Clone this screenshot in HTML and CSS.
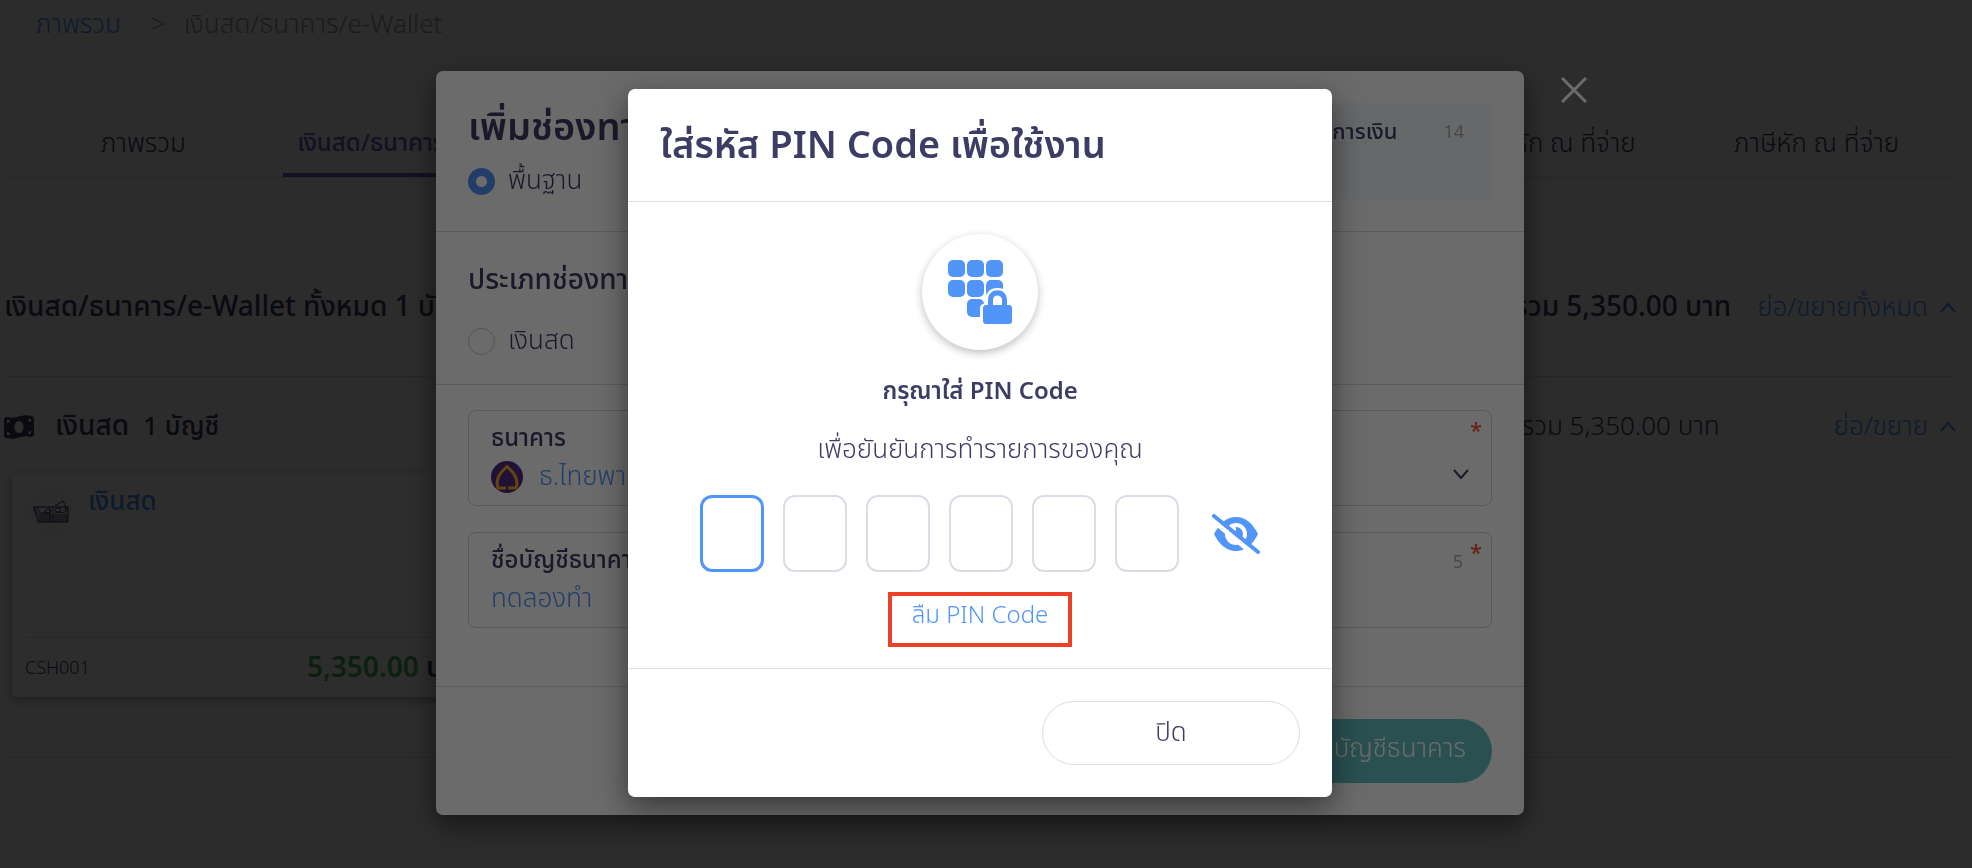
FILE: index.html
```html
<!DOCTYPE html>
<html lang="th">
<head>
    <meta charset="UTF-8">
    <meta name="viewport" content="width=device-width, initial-scale=1.0">
    <title>เงินสด/ธนาคาร/e-Wallet</title>
    <link rel="stylesheet" href="styles.css">
</head>
<body>
    <main class="page">
        <nav class="breadcrumb">
            <a href="#">ภาพรวม</a>
            <span class="sep">&gt;</span>
            <span>เงินสด/ธนาคาร/e-Wallet</span>
        </nav>
        <nav class="tabs">
            <a class="tab" href="#">ภาพรวม</a>
            <a class="tab active" href="#">เงินสด/ธนาคาร/e-Wallet</a>
            <a class="tab" href="#">สำรองรับ-จ่าย</a>
            <a class="tab" href="#">เช็ครับ</a>
            <a class="tab" href="#">เช็คจ่าย</a>
            <a class="tab" href="#">ภาษีถูกหัก ณ ที่จ่าย</a>
            <a class="tab" href="#">ภาษีหัก ณ ที่จ่าย</a>
        </nav>
        <section class="summary">
            <h2>เงินสด/ธนาคาร/e-Wallet ทั้งหมด 1 บัญชี</h2>
            <strong class="total">รวม 5,350.00 บาท</strong>
            <a class="toggle" href="#">ย่อ/ขยายทั้งหมด
                <svg width="16" height="10" viewBox="0 0 16 10"><path d="M1 9l7-8 7 8"/></svg>
            </a>
        </section>
        <section class="group">
            <svg class="bill" width="30" height="24" viewBox="0 0 30 24">
                <path fill-rule="evenodd" d="M3 2C10 5 18-2 27 1q3 0 3 3v15q0 3-3 3C18 19 11 26 3 23q-3 0-3-3V4q0-2 3-2zM15 6c-6 0-6 12 0 12s6-12 0-12zM3 5v3q3 0 3-3zm0 15h3q0-3-3-3zM27 4h-3q0 3 3 3zm0 15v-3q-3 0-3 3z"/>
            </svg>
            <h3>เงินสด</h3>
            <span class="count">1 บัญชี</span>
            <span class="total">รวม 5,350.00 บาท</span>
            <a class="toggle" href="#">ย่อ/ขยาย
                <svg width="16" height="10" viewBox="0 0 16 10"><path d="M1 9l7-8 7 8"/></svg>
            </a>
        </section>
        <article class="card">
            <div class="card-top">
                <span class="card-icon">
                    <svg width="36" height="24" viewBox="0 0 36 24">
                        <path d="M1 7h34v15H5L1 8zM1 7l4 8h30M5 17h30M5 19h30M5 21h30M17 7v15M20 7v15M22 6l8-5 5 10"/>
                        <path d="M4 7l3 6h9M32 7l1 5-11 1"/>
                        <ellipse cx="15" cy="11" rx="3" ry="2"/><ellipse cx="25" cy="10" rx="3" ry="2"/>
                    </svg>
                </span>
                <a href="#">เงินสด</a>
            </div>
            <div class="card-bottom">
                <span class="code">CSH001</span>
                <strong><span class="green">5,350.00</span> บาท</strong>
            </div>
        </article>
    </main>

    <div class="overlay">
        <div class="dialog dialog-channel">
            <form class="dialog-form">
                <header class="channel-head">
                    <div>
                        <h1>เพิ่มช่องทางการเงิน</h1>
                        <label class="radio"><input type="radio" name="level" checked> พื้นฐาน</label>
                    </div>
                    <div class="info">
                        <span>ชื่อช่องทางการเงิน</span>
                        <small>14</small>
                    </div>
                </header>
                <section class="channel-type">
                    <h2>ประเภทช่องทางการเงิน</h2>
                    <label class="radio"><input type="radio" name="type"> เงินสด</label>
                </section>
                <section class="fields">
                    <div class="field">
                        <label for="bank">ธนาคาร</label>
                        <div class="bank">
                            <svg width="32" height="32" viewBox="0 0 32 32">
                                <circle cx="16" cy="16" r="16" fill="#4e2a84"/>
                                <path d="M15 27H7l-1-4C6 15 11 10 16 5.500 21 10 26 15 26 23l-1 4h-8" fill="none" stroke="#f0a028" stroke-width="3"/>
                                <path d="M16 22v5" stroke="#4e2a84" stroke-width="2"/>
                            </svg>
                            <select id="bank"><option>ธ.ไทยพาณิชย์</option></select>
                            <svg class="chevron" width="16" height="10" viewBox="0 0 16 10"><path d="M1 1l7 8 7-8"/></svg>
                        </div>
                        <span class="required">*</span>
                    </div>
                    <div class="field">
                        <label for="account">ชื่อบัญชีธนาคาร</label>
                        <input id="account" type="text" value="ทดลองทำ">
                        <small class="counter">5</small>
                        <span class="required">*</span>
                    </div>
                </section>
                <footer>
                    <button type="button" class="btn-primary">เพิ่มบัญชีธนาคาร</button>
                </footer>
            </form>
            <button class="close" type="button" aria-label="ปิด">
                <svg width="26" height="26" viewBox="0 0 26 26"><path d="M1 1l24 24M25 1L1 25"/></svg>
            </button>
        </div>
    </div>

    <div class="overlay">
        <div class="dialog dialog-pin">
            <header>
                <h1>ใส่รหัส PIN Code เพื่อใช้งาน</h1>
            </header>
            <section class="pin-body">
                <div class="pin-icon">
                    <svg width="64" height="64" viewBox="0 0 64 64">
                        <rect x="0" y="0" width="17" height="17" rx="5"/>
                        <rect x="19" y="0" width="17" height="17" rx="5"/>
                        <rect x="38" y="0" width="17" height="17" rx="5"/>
                        <rect x="0" y="20" width="17" height="17" rx="5"/>
                        <rect x="19" y="20" width="17" height="17" rx="5"/>
                        <rect x="38" y="20" width="17" height="17" rx="5"/>
                        <rect x="19" y="39" width="17" height="18" rx="5"/>
                        <path class="halo" d="M38 43v-3q0-12 11.500-12t11.500 12v5h3v20H38q-6 0-6-4V48q0-4 6-5z"/>
                        <path d="M40 45v-5c0-13 19-13 19 0v5h2q3 0 3 3v13q0 3-3 3H38q-3 0-3-3V48q0-3 3-3zm5 0h9v-5c0-6-9-6-9 0z" fill-rule="evenodd"/>
                    </svg>
                </div>
                <h2>กรุณาใส่ PIN Code</h2>
                <p>เพื่อยันยันการทำรายการของคุณ</p>
                <div class="pin-row">
                    <input class="pin focus" type="password" maxlength="1" aria-label="PIN 1">
                    <input class="pin" type="password" maxlength="1" aria-label="PIN 2">
                    <input class="pin" type="password" maxlength="1" aria-label="PIN 3">
                    <input class="pin" type="password" maxlength="1" aria-label="PIN 4">
                    <input class="pin" type="password" maxlength="1" aria-label="PIN 5">
                    <input class="pin" type="password" maxlength="1" aria-label="PIN 6">
                    <button class="eye" type="button" aria-label="แสดง PIN">
                        <svg width="48" height="40" viewBox="0 0 48 40">
                            <path class="fill" d="M2 20C7 10 14 3 24 3s17 7 22 17C41 30 34 37 24 37S7 30 2 20z"/>
                            <circle class="ring" cx="24" cy="20" r="9"/>
                            <circle class="gap" cx="21" cy="15" r="3"/>
                            <path class="cut" d="M-1 5l46 38"/>
                            <path class="slash" d="M2 2l44 36"/>
                        </svg>
                    </button>
                </div>
                <a class="forgot" href="#">ลืม PIN Code</a>
            </section>
            <footer>
                <button type="button" class="btn-outline">ปิด</button>
            </footer>
        </div>
    </div>
</body>
</html>
```
FILE: styles.css
```css
* {
    box-sizing: border-box;
}
body {
    margin: 0;
    height: 100vh;
    overflow: hidden;
    background: #f6f6f6;
    color: #3c3c64;
    font-family: "Noto Sans Thai", "Noto Sans", sans-serif;
    font-size: 26px;
    font-weight: 350;
    line-height: 32px;
}
h1, h2, h3, p {
    margin: 0;
}
a {
    color: #5195f8;
    text-decoration: none;
}
svg {
    flex: none;
}
button, input, select {
    font: inherit;
    color: inherit;
}
.page {
    padding: 0 16px 0 4px;
}
.breadcrumb {
    display: flex;
    gap: 18px;
    padding: 9px 32px 7px;
    color: #999;
    font-weight: 300;
}
.breadcrumb .sep {
    margin-left: 12px;
}
.tabs {
    display: grid;
    grid-template-columns: repeat(7, 1fr);
    margin-top: 67px;
    border-bottom: 1px solid #d8d8e4;
}
.tab {
    height: 62px;
    padding-top: 13px;
    text-align: center;
    color: #3c3c64;
    white-space: nowrap;
}
.tab.active {
    color: #6464c8;
    font-size: 24px;
    font-weight: 500;
    border-bottom: 4px solid #6464c8;
}
.summary {
    display: flex;
    align-items: center;
    height: 199px;
    padding-top: 62px;
    border-bottom: 1px solid #dcdce6;
}
.summary h2 {
    flex: 1;
    font-size: 28px;
    font-weight: 500;
}
.summary .total {
    font-size: 28px;
    font-weight: 500;
    margin-right: 26px;
}
.toggle {
    display: flex;
    align-items: center;
    gap: 12px;
    font-weight: 300;
}
.toggle path, .chevron path {
    fill: none;
    stroke: currentColor;
    stroke-width: 2;
}
.group {
    display: flex;
    align-items: center;
    height: 96px;
    padding-top: 4px;
}
.group .bill {
    fill: #3c3c64;
}
.group h3 {
    margin: 0 14px 0 21px;
    font-size: 28px;
    font-weight: 500;
}
.group .count {
    flex: 1;
    font-weight: 500;
}
.group .total {
    font-weight: 300;
}
.group .toggle {
    margin-left: 114px;
}
.card {
    width: 474px;
    height: 224px;
    margin-left: 8px;
    padding: 13px;
    background: #fff;
    border-radius: 6px;
    box-shadow: 0 3px 8px rgba(0, 0, 0, 0.3);
}
.card-top {
    display: flex;
    gap: 12px;
    height: 152px;
    border-bottom: 1px solid #dcdce6;
    font-weight: 500;
}
.card-icon {
    display: flex;
    align-items: center;
    justify-content: center;
    width: 51px;
    height: 51px;
    border-radius: 50%;
    background: #f6f6f6;
}
.card-icon svg {
    fill: none;
    stroke: #3c3c64;
}
.card-bottom {
    display: flex;
    align-items: center;
    justify-content: space-between;
    padding-top: 15px;
    font-size: 28px;
}
.card-bottom strong {
    font-weight: 600;
}
.code {
    font-size: 18px;
}
.green {
    color: #46af5a;
}
.page::after {
    content: "";
    display: block;
    margin-top: 60px;
    border-top: 1px solid #dcdce6;
}

.overlay {
    position: fixed;
    inset: 0;
    display: flex;
    justify-content: center;
    align-items: center;
    padding-right: 12px;
    background: rgba(0, 0, 0, 0.58);
}
.dialog {
    position: relative;
    margin-top: 18px;
    background: #fff;
    border-radius: 7px;
    box-shadow: 0 10px 30px rgba(0, 0, 0, 0.5);
}
.dialog h1 {
    font-size: 38px;
    font-weight: 600;
    line-height: 52px;
}
.dialog header, .dialog section {
    border-bottom: 1px solid #dcdce6;
}
.dialog footer {
    display: flex;
    justify-content: flex-end;
    padding: 32px;
}
.dialog-channel {
    width: 1088px;
}
.channel-head {
    display: flex;
    justify-content: space-between;
    height: 161px;
    padding: 32px;
}
.info {
    display: flex;
    justify-content: space-between;
    width: 500px;
    height: 96px;
    padding: 14px 28px 0;
    background: #f5f7fd;
    border-radius: 6px;
    font-size: 22px;
    font-weight: 500;
}
.info span {
    flex: 1;
    text-align: right;
    margin-right: 46px;
}
.dialog small {
    font-size: 18px;
    font-weight: 400;
    color: #aaa;
}
.radio {
    display: flex;
    align-items: center;
    gap: 13px;
}
.channel-head .radio {
    margin-top: 10px;
}
.radio input {
    appearance: none;
    width: 27px;
    height: 27px;
    margin: 0;
    border: 1px solid #c8c8d2;
    border-radius: 50%;
}
.radio input:checked {
    border: 8px solid #5195f8;
}
.channel-type {
    height: 153px;
    padding: 32px;
}
.channel-type h2 {
    font-size: 28px;
    font-weight: 500;
    line-height: 34px;
    margin-bottom: 27px;
}
.fields {
    display: grid;
    gap: 26px;
    height: 302px;
    padding: 25px 32px;
    align-content: start;
}
.field {
    position: relative;
    display: flex;
    flex-direction: column;
    gap: 6px;
    height: 96px;
    padding: 12px 22px;
    border: 1px solid #d0d0dc;
    border-radius: 8px;
}
.field label {
    font-size: 24px;
    font-weight: 500;
}
.field input, .field select {
    flex: 1;
    appearance: none;
    padding: 0;
    border: 0;
    background: none;
    color: #5195f8;
}
.bank {
    display: flex;
    align-items: center;
    gap: 16px;
    height: 32px;
}
.chevron {
    margin-bottom: 6px;
}
.required {
    position: absolute;
    top: 5px;
    right: 9px;
    font-size: 22px;
    font-weight: 500;
    color: #f05032;
}
.counter {
    position: absolute;
    top: 14px;
    right: 28px;
}
.btn-primary {
    height: 64px;
    width: 300px;
    border: 0;
    border-radius: 32px;
    background: #64bfc3;
    color: #fff;
    text-align: right;
    padding: 0 26px 4px;
}
.close {
    position: absolute;
    top: 6px;
    left: 100%;
    margin-left: 37px;
    padding: 0;
    border: 0;
    background: none;
    line-height: 0;
}
.close path {
    stroke: #fff;
    stroke-width: 3;
}
.dialog-pin {
    width: 704px;
}
.dialog-pin header {
    height: 113px;
    padding: 32px;
}
.pin-body {
    display: flex;
    flex-direction: column;
    align-items: center;
    padding: 32px 0 21px;
}
.pin-icon {
    display: flex;
    align-items: center;
    justify-content: center;
    width: 116px;
    height: 116px;
    border-radius: 50%;
    box-shadow: 0 3px 8px rgba(0, 0, 0, 0.25);
    fill: #5195f8;
}
.pin-icon .halo {
    fill: #fff;
}
.pin-body h2 {
    margin-top: 26px;
    font-size: 24px;
    font-weight: 600;
}
.pin-body p {
    margin-top: 26px;
}
.pin-row {
    display: flex;
    align-items: center;
    gap: 19px;
    margin: 29px 0 20px;
}
.pin {
    width: 64px;
    height: 77px;
    padding: 0;
    border: 2px solid #dcdce6;
    border-radius: 12px;
    text-align: center;
}
.pin.focus {
    border: 3px solid #5195f8;
}
.eye {
    margin-left: 14px;
    padding: 0;
    border: 0;
    background: none;
    line-height: 0;
}
.eye .fill {
    fill: #5195f8;
}
.eye .ring {
    fill: #5195f8;
    stroke: #fff;
    stroke-width: 4;
}
.eye .gap {
    fill: #fff;
}
.eye .cut {
    stroke: #fff;
    stroke-width: 5;
}
.eye .slash {
    stroke: #5195f8;
    stroke-width: 4;
    stroke-linecap: round;
}
.forgot {
    padding: 4px 20px 11px;
    border: 4px solid #eb4128;
    font-size: 24px;
}
.btn-outline {
    width: 258px;
    height: 64px;
    border: 1px solid #dcdce6;
    border-radius: 32px;
    background: #fff;
}
```
